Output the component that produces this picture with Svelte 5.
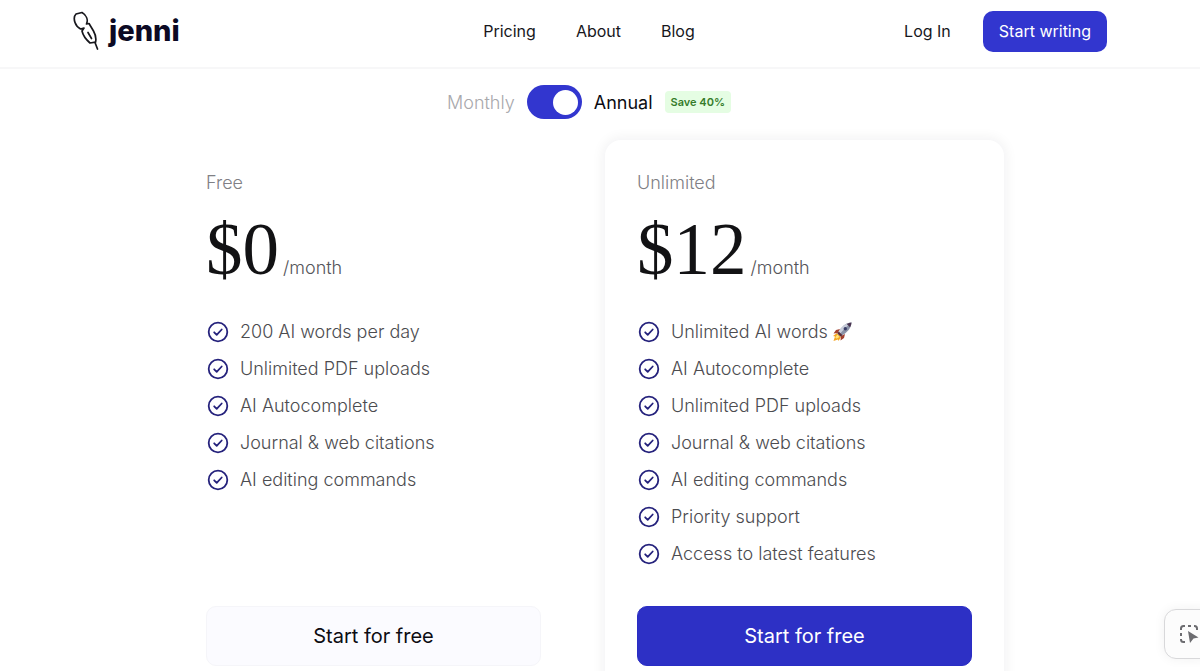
<script>
  let annual = $state(true);

  const plans = [
    {
      name: 'Free',
      price: '$0',
      features: [
        '200 AI words per day',
        'Unlimited PDF uploads',
        'AI Autocomplete',
        'Journal & web citations',
        'AI editing commands'
      ]
    },
    {
      name: 'Unlimited',
      price: '$12',
      featured: true,
      features: [
        'Unlimited AI words',
        'AI Autocomplete',
        'Unlimited PDF uploads',
        'Journal & web citations',
        'AI editing commands',
        'Priority support',
        'Access to latest features'
      ]
    }
  ];
</script>

{#snippet check()}
  <svg class="check" viewBox="0 0 22 22" aria-hidden="true">
    <circle cx="11" cy="11" r="9.3" />
    <path d="M7.200 11.300l2.500 2.500 5-5.300" />
  </svg>
{/snippet}

{#snippet rocket()}
  <svg class="rocket" viewBox="0 0 20 20" role="img" aria-label="rocket">
    <path d="M5 11l-4 3 2 .5L1.500 19l4.500-1.500.5 1.500 2.500-4z" fill="#f5a623" />
    <path d="M5.500 12.500L3 15.500l1.500.5-.5 1 3.500-2z" fill="#ffe47a" />
    <path d="M8 7L4 8 1.500 11.500 6 11zM13 12l-1 4-3.500 2.500L9 14z" fill="#a3402f" />
    <path d="M19.500.5C14 1 10 3.500 5.500 11.500l3 3C16 10 19 6 19.500.5z" fill="#8b93a8" />
    <path d="M19.500.5C14 1 10 3.500 5.500 11.500L7 13C11 8 15 4 19.500.5z" fill="#c9cedb" />
    <path d="M19.500.5c-1.800.2-3.400.6-4.800 1.400l3.400 3.400C18.900 3.900 19.400 2.300 19.500.5z" fill="#4a3550" />
    <path d="M5.500 11.500l1.200-2 3.800 3.800-2 1.200zM10.500 10l-4 4.500" fill="#5b2d38" />
    <circle cx="13.300" cy="6.700" r="1.700" fill="#3a3f68" />
  </svg>
{/snippet}

<div class="page">
  <header>
    <div class="bar">
      <a class="logo" href="#home">
        <svg class="feather" viewBox="0 0 26 40" aria-hidden="true">
          <path d="M9 1.500L3 3C1 5 1 8.500 2 11.500c1 3 3 5 5.500 6.500L11 17 9 20c1 4.500 4 8.500 8 12l5.500-.8c1-4-.2-8-2-11.200L16 12.500l-2.500.5C15.500 8.500 13 4 9 1.500z" />
          <path d="M15 21.500l3.500 6M22 31.500l2.500 6.500" />
        </svg>
        <span>jenni</span>
      </a>
      <nav aria-label="Main">
        <a href="#pricing">Pricing</a>
        <a href="#about">About</a>
        <a href="#blog">Blog</a>
      </nav>
      <div class="account">
        <a href="#login">Log In</a>
        <button class="write" type="button">Start writing</button>
      </div>
    </div>
  </header>

  <main>
    <div class="billing">
      <span class:off={annual}>Monthly</span>
      <input type="checkbox" role="switch" aria-label="Annual billing" bind:checked={annual} />
      <span class:off={!annual}>Annual</span>
      <span class="save">Save 40%</span>
    </div>

    <div class="plans">
      {#each plans as plan}
        <section class="plan" class:featured={plan.featured}>
          <h2>{plan.name}</h2>
          <p class="price"><span class="amount">{plan.price}</span><span class="per">/month</span></p>
          <ul>
            {#each plan.features as feature, i}
              <li>
                {@render check()}
                <span>{feature}</span>
                {#if plan.featured && i === 0}{@render rocket()}{/if}
              </li>
            {/each}
          </ul>
          <button type="button">Start for free</button>
        </section>
      {/each}
    </div>
  </main>

  <button class="capture" type="button" aria-label="Capture area">
    <svg viewBox="0 0 20 20" aria-hidden="true">
      <path class="frame" d="M2 6V4.500Q2 2 4.500 2H6M9 2h3M15 2h.5Q18 2 18 4.500V6M2 9v3M2 15v.5Q2 18 4.500 18H6" />
      <path class="cursor" d="M9 7l10.500 6.500-5 1L11 19z" />
    </svg>
  </button>
</div>

<style>
  :global(body) {
    margin: 0;
    background: #fff;
    overflow: hidden;
  }
  .page {
    font-family: Inter, sans-serif;
    color: #17171c;
    height: 100vh;
    overflow: hidden;
  }
  a {
    color: inherit;
    text-decoration: none;
  }
  button {
    font: inherit;
    cursor: pointer;
  }
  header {
    padding: 0 22px 0 0;
    border-bottom: 2px solid #f7f7f8;
  }
  .bar {
    display: grid;
    grid-template-columns: 1fr auto 1fr;
    align-items: center;
    max-width: 1036px;
    height: 62px;
    margin: 0 auto;
    padding-bottom: 5px;
  }
  .logo {
    display: flex;
    align-items: center;
    gap: 10px;
    margin-left: 2px;
    font-size: 29px;
    line-height: 36px;
    font-weight: 800;
    color: #0c0a24;
  }
  .feather {
    width: 26px;
    height: 40px;
    fill: none;
    stroke: #17171c;
    stroke-width: 1.7;
    stroke-linejoin: round;
    stroke-linecap: round;
  }
  nav {
    display: flex;
    gap: 40px;
    font-size: 16px;
  }
  .account {
    display: flex;
    align-items: center;
    justify-content: flex-end;
    gap: 32px;
    font-size: 16px;
  }
  .write {
    height: 41px;
    padding: 0 16px;
    border: 0;
    border-radius: 10px;
    background: #3236cf;
    color: #fff;
  }
  main {
    padding: 16px 22px 0 0;
  }
  .billing {
    display: flex;
    justify-content: center;
    align-items: center;
    gap: 12px;
    height: 34px;
    font-size: 18px;
    color: #0c0c12;
  }
  .billing .off {
    color: #a8a8ac;
    font-weight: 300;
  }
  .billing input {
    appearance: none;
    display: flex;
    width: 55px;
    height: 34px;
    margin: 0;
    padding: 0 4px;
    align-items: center;
    border-radius: 17px;
    background: #b4b4b8;
    cursor: pointer;
  }
  .billing input::before {
    content: '';
    width: 25px;
    height: 25px;
    border-radius: 50%;
    background: #fff;
  }
  .billing input:checked {
    justify-content: flex-end;
    background: #3236cf;
  }
  .billing .save {
    padding: 0 6px;
    border-radius: 4px;
    background: #e5fde3;
    color: #367c2b;
    font-size: 11px;
    line-height: 22px;
    font-weight: 600;
  }
  .plans {
    display: grid;
    grid-template-columns: 1fr 1fr;
    gap: 32px;
    max-width: 830px;
    margin: 21px auto 0;
  }
  .plan {
    display: flex;
    flex-direction: column;
    padding: 32px;
    border-radius: 16px;
  }
  .featured {
    box-shadow: 0 0 12px 3px rgba(20, 20, 30, 0.05);
  }
  h2 {
    margin: 0;
    font-size: 18px;
    line-height: 22px;
    font-weight: 300;
    color: #808085;
  }
  .price {
    display: flex;
    align-items: baseline;
    gap: 4px;
    height: 80px;
    margin: 16px 0 31px;
    line-height: 80px;
  }
  .amount {
    font-family: 'Liberation Serif', serif;
    font-size: 73px;
    color: #121214;
  }
  .per {
    font-size: 18px;
    font-weight: 300;
    color: #55555a;
  }
  ul {
    flex: 1;
    display: flex;
    flex-direction: column;
    gap: 15px;
    margin: 0 0 41px;
    padding: 0;
    list-style: none;
  }
  li {
    display: flex;
    align-items: center;
    font-size: 18px;
    line-height: 22px;
    font-weight: 300;
    color: #4c4c50;
  }
  .check {
    width: 22px;
    height: 22px;
    margin: 0 11px 0 1px;
    fill: none;
    stroke: #25227c;
    stroke-width: 1.8;
    stroke-linecap: round;
    stroke-linejoin: round;
  }
  .rocket {
    width: 20px;
    height: 20px;
    margin-left: 4px;
  }
  .plan button {
    height: 60px;
    border: 1px solid #f5f5f9;
    border-radius: 10px;
    background: #fbfbff;
    color: #0c0c12;
    font-size: 20px;
  }
  .plan.featured button {
    border-color: #2a2dc4;
    background: #2d30c5;
    color: #fff;
  }
  .capture {
    position: fixed;
    right: -14px;
    bottom: 12px;
    width: 50px;
    height: 50px;
    padding: 0 0 0 14px;
    border: 1px solid #d8d8da;
    border-radius: 12px;
    background: #fcfcfc;
    box-shadow: 0 0 12px rgba(0, 0, 0, 0.06);
  }
  .capture svg {
    display: block;
    width: 20px;
    height: 20px;
  }
  .frame {
    fill: none;
    stroke: #6c6c70;
    stroke-width: 2;
  }
  .cursor {
    fill: #6c6c70;
  }
</style>
